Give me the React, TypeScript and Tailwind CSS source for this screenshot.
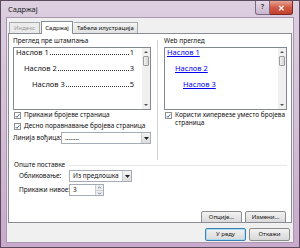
import { ChevronDown, ChevronUp } from 'lucide-react';

const FONT = { fontFamily: '"Noto Sans", "Liberation Sans", sans-serif' };

function Check({ label, second }: { label: string; second?: string }) {
  return (
    <div className="flex items-start gap-[3px]">
      <div className="mt-[1px] flex h-[7px] w-[7px] shrink-0 items-center justify-center border border-[#8f8f8f] bg-white">
        <svg width="6" height="6" viewBox="0 0 6 6">
          <path d="M0.8 3 L2.3 4.6 L5.2 0.9" fill="none" stroke="#3c5a8a" strokeWidth="1.1" />
        </svg>
      </div>
      <div className="whitespace-nowrap leading-[8px]">
        <div>{label}</div>
        {second && <div>{second}</div>}
      </div>
    </div>
  );
}

function Select({ value, width }: { value: string; width: string }) {
  return (
    <div className={`flex h-[12px] items-stretch border border-[#a5acb5] bg-white ${width}`}>
      <div className="flex-1 whitespace-nowrap pl-[3px] leading-[10px]">{value}</div>
      <div className="flex w-[9px] items-center justify-center border-l border-[#c9ccd1] bg-gradient-to-b from-[#f4f4f4] to-[#dcdcdc]">
        <svg width="5" height="3" viewBox="0 0 5 3">
          <path d="M0 0 H5 L2.5 3 Z" fill="#222" />
        </svg>
      </div>
    </div>
  );
}

function Btn({ label, primary }: { label: string; primary?: boolean }) {
  return (
    <div
      className={`flex h-[13px] w-[41px] items-center justify-center whitespace-nowrap rounded-[2px] border bg-gradient-to-b from-[#f2f2f2] to-[#d8d8d8] text-[6px] ${
        primary ? 'border-[#3c7fb1] shadow-[inset_0_0_0_1px_#a6dcf6]' : 'border-[#8d8d8d]'
      }`}
    >
      {label}
    </div>
  );
}

function ScrollBar() {
  return (
    <div className="flex w-[8px] flex-col bg-[#f0f0f0]">
      <div className="flex h-[8px] items-center justify-center">
        <svg width="4" height="2" viewBox="0 0 4 2">
          <path d="M0 2 H4 L2 0 Z" fill="#555" />
        </svg>
      </div>
      <div className="mx-[1px] h-[10px] rounded-[1px] border border-[#9b9b9b] bg-gradient-to-r from-[#f1f1f1] to-[#d6d6d6]" />
      <div className="flex-1" />
      <div className="flex h-[8px] items-center justify-center">
        <svg width="4" height="2" viewBox="0 0 4 2">
          <path d="M0 0 H4 L2 2 Z" fill="#555" />
        </svg>
      </div>
    </div>
  );
}

function TocLine({ name, page, indent }: { name: string; page: string; indent: string }) {
  return (
    <div className={`flex h-[9px] items-end text-[7.5px] leading-[9px] ${indent}`}>
      <span className="whitespace-nowrap">{name}</span>
      <span className="mx-[1px] mb-[2px] flex-1 border-b border-dotted border-[#333]" />
      <span>{page}</span>
    </div>
  );
}

export default function App() {
  return (
    <div
      style={FONT}
      className="flex h-[248px] w-[300px] flex-col overflow-hidden border border-[#5a4a5c] bg-gradient-to-b from-[#dccfe0] via-[#d3bfd6] to-[#c9a9cc] text-[6.5px] text-[#111]"
    >
      {/* title bar */}
      <div className="flex h-[16px] shrink-0 items-start">
        <div className="pl-[7px] pt-[3px] text-[7.5px] text-[#222]">Садржај</div>
        <div className="flex-1" />
        <div className="mr-[6px] flex h-[14px]">
          <div className="flex w-[15px] items-center justify-center rounded-bl-[3px] border border-t-0 border-[#7c6a80] bg-gradient-to-b from-[#e6dbe8] to-[#c8b4cc] text-[7px] font-bold text-[#444]">
            ?
          </div>
          <div className="flex w-[23px] items-center justify-center rounded-br-[3px] border border-l-0 border-t-0 border-[#7a2a22] bg-gradient-to-b from-[#e8a294] via-[#d05a46] to-[#c43f2c] text-[8px] font-bold text-white">
            ✕
          </div>
        </div>
      </div>

      {/* client */}
      <div className="mx-[5px] mb-[4px] flex h-[226px] shrink-0 flex-col border border-[#a997ad] bg-[#f0f0f0] px-[1px]">
        {/* tabs */}
        <div className="mt-[3px] flex h-[12px] items-end pl-[1px] text-[6px]">
          <div className="h-[11px] border border-b-0 border-[#a9aaae] bg-[#ebebeb] px-[4px] leading-[10px] text-[#9a9a9a]">
            Индекс
          </div>
          <div className="relative z-10 -mb-[1px] ml-[1px] h-[13px] border border-b-0 border-[#898c95] bg-white px-[3px] leading-[12px]">
            Садржај
          </div>
          <div className="ml-[1px] h-[11px] whitespace-nowrap border border-b-0 border-l-0 border-[#a9aaae] bg-gradient-to-b from-[#f4f4f4] to-[#e2e2e2] px-[3px] leading-[10px]">
            Табела илустрација
          </div>
        </div>

        {/* panel */}
        <div className="flex h-[190px] shrink-0 flex-col overflow-hidden border border-[#898c95] bg-white px-[4px] pt-[3px]">
          <div className="flex">
            {/* left column */}
            <div className="flex w-[139px] flex-col">
              <div className="whitespace-nowrap leading-[8px]">Преглед пре штампања</div>
              <div className="mt-[2px] flex h-[63px] border border-[#828790]">
                <div className="flex flex-1 flex-col gap-[7px] pl-[2px] pr-[8px]">
                  <TocLine name="Наслов 1" page="1" indent="" />
                  <TocLine name="Наслов 2" page="3" indent="pl-[8px]" />
                  <TocLine name="Наслов 3" page="5" indent="pl-[16px]" />
                </div>
                <ScrollBar />
              </div>
              <div className="mt-[1px] flex flex-col gap-[3px] pl-[1px]">
                <Check label="Прикажи бројеве страница" />
                <Check label="Десно поравнавање бројева страница" />
              </div>
              <div className="mt-[2px] flex items-center">
                <div className="w-[48px] whitespace-nowrap">Линија вођица:</div>
                <Select value="........" width="w-[90px]" />
              </div>
            </div>

            {/* separator */}
            <div className="mx-[6px] mt-[3px] h-[120px] w-px bg-[#d5d5d5]" />

            {/* right column */}
            <div className="flex w-[127px] flex-col">
              <div className="whitespace-nowrap leading-[8px]">Web преглед</div>
              <div className="mt-[2px] flex h-[63px] border border-[#828790]">
                <div className="flex flex-1 flex-col gap-[7px] pl-[2px] text-[7.5px] leading-[9px] text-[#0000ee] underline">
                  <div>Наслов 1</div>
                  <div className="pl-[8px]">Наслов 2</div>
                  <div className="pl-[16px]">Наслов 3</div>
                </div>
                <ScrollBar />
              </div>
              <div className="mt-[1px] pl-[1px]">
                <Check label="Користи хипервезе уместо бројева" second="страница" />
              </div>
            </div>
          </div>

          {/* general */}
          <div className="mt-[1px] flex items-center">
            <div className="whitespace-nowrap pl-[1px] leading-[8px]">Опште поставке</div>
            <div className="ml-[4px] h-px flex-1 bg-[#e4e6ea]" />
          </div>
          <div className="mt-[1px] flex flex-col gap-[2px] pl-[6px]">
            <div className="flex items-center">
              <div className="w-[50px] whitespace-nowrap">Обликовање:</div>
              <Select value="Из предлошка" width="w-[63px]" />
            </div>
            <div className="flex items-center">
              <div className="w-[50px] whitespace-nowrap">Прикажи нивое:</div>
              <div className="flex h-[12px] w-[35px] border border-[#a5acb5] bg-white">
                <div className="flex-1 pl-[3px] leading-[10px]">3</div>
                <div className="flex w-[8px] flex-col border-l border-[#c9ccd1] bg-[#efefef]">
                  <div className="flex flex-1 items-center justify-center border-b border-[#d0d0d0]">
                    <ChevronUp size={5} strokeWidth={4} color="#3a6ea5" />
                  </div>
                  <div className="flex flex-1 items-center justify-center">
                    <ChevronDown size={5} strokeWidth={4} color="#3a6ea5" />
                  </div>
                </div>
              </div>
            </div>
          </div>

          <div className="mt-[15px] flex justify-end gap-[3px] pr-[1px]">
            <Btn label="Опције..." />
            <Btn label="Измени..." />
          </div>
        </div>

        {/* bottom buttons */}
        <div className="mt-[5px] flex justify-end gap-[3px] pr-[2px]">
          <Btn label="У реду" primary />
          <Btn label="Откажи" />
        </div>
      </div>
    </div>
  );
}
